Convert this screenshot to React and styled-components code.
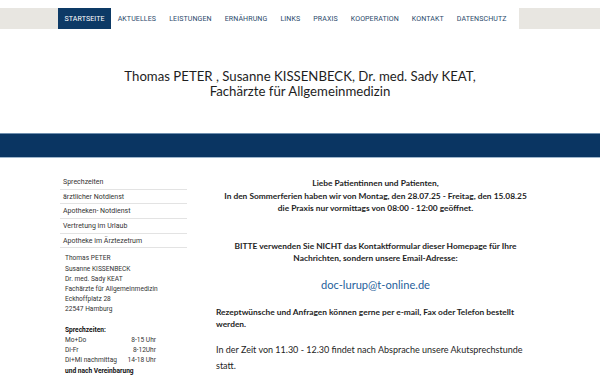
import React from "react"
import styled, { createGlobalStyle } from "styled-components"

const GlobalStyle = createGlobalStyle`
  body {
    margin: 0;
    background: #ffffff;
    font-family: "Lato", "Roboto", sans-serif;
  }
`

const Page = styled.div`
  width: 600px;
  height: 375px;
  overflow: hidden;
  background: #ffffff;
`

const NavBand = styled.div`
  display: grid;
  grid-template-columns: 58px auto 1fr;
  margin-top: 8px;
  height: 21px;
`
const NavFill = styled.div`
  background: #e8e6e1;
`
const Nav = styled.nav`
  display: flex;
  align-items: stretch;
  padding-right: 6px;
  background: #ffffff;
`
const NavItem = styled.a`
  display: flex;
  align-items: center;
  padding: 0 6.5px;
  font-family: "Roboto", sans-serif;
  font-size: 7.05px;
  text-transform: uppercase;
  letter-spacing: 0.1px;
  color: ${p => (p.$active ? "#ffffff" : "#2b4a6b")};
  background: ${p => (p.$active ? "#0d3a66" : "transparent")};
  text-decoration: none;
  white-space: nowrap;
`

const Header = styled.header`
  height: 104px;
  display: flex;
  justify-content: center;
  padding-top: 40px;
  box-sizing: border-box;
`
const Title = styled.h1`
  margin: 0;
  font-family: "Lato", sans-serif;
  font-weight: 400;
  font-size: 13.2px;
  line-height: 15px;
  text-align: center;
  color: #1e1e1e;
`

const Band = styled.div`
  height: 23px;
  background: #0a3562;
  border-top: 1px solid #6f8fae;
  border-bottom: 1px solid #9fb6cc;
`

const Body = styled.div`
  display: grid;
  grid-template-columns: 127px 1fr;
  column-gap: 29px;
  padding: 17px 65px 0 60px;
`

const Side = styled.aside`
  display: flex;
  flex-direction: column;
`
const SideMenu = styled.ul`
  list-style: none;
  margin: 0;
  padding: 0;
`
const SideItem = styled.li`
  height: 13.7px;
  display: flex;
  align-items: center;
  padding-left: 3px;
  font-family: "Roboto", sans-serif;
  font-size: 7px;
  color: #333333;
  border-bottom: 1px solid #e3e3e3;
`
const Address = styled.div`
  padding: 5px 0 0 5px;
  font-family: "Roboto", sans-serif;
  font-size: 6.6px;
  line-height: 10.2px;
  color: #333333;
`
const Line = styled.div`
  white-space: nowrap;
  font-weight: ${p => (p.$bold ? 700 : 400)};
  color: ${p => (p.$bold ? "#111111" : "#333333")};
`
const Spacer = styled.div`
  height: 10.2px;
`
const HoursRow = styled.div`
  display: grid;
  grid-template-columns: 62px 29px;
  white-space: nowrap;
  span:last-child {
    text-align: right;
  }
`

const Main = styled.main`
  font-family: "Lato", sans-serif;
  color: #1e1e1e;
`
const Notice = styled.p`
  margin: ${p => p.$top || 2}px 0 0;
  text-align: center;
  font-weight: 700;
  font-size: 8.4px;
  line-height: 12.5px;
`
const Email = styled.a`
  display: block;
  margin-top: 13px;
  text-align: center;
  font-size: 11.1px;
  line-height: 13px;
  font-weight: 400;
  color: #1f5f9c;
  text-decoration: none;
`
const Para = styled.p`
  margin: ${p => p.$top}px 0 0;
  font-size: ${p => (p.$bold ? 8.4 : 9)}px;
  font-weight: ${p => (p.$bold ? 700 : 400)};
  line-height: ${p => (p.$bold ? 12.5 : 16)}px;
`

const navItems = [
  "Startseite",
  "Aktuelles",
  "Leistungen",
  "Ernährung",
  "Links",
  "Praxis",
  "Kooperation",
  "Kontakt",
  "Datenschutz",
]

const sideItems = [
  "Sprechzeiten",
  "ärztlicher Notdienst",
  "Apotheken- Notdienst",
  "Vertretung im Urlaub",
  "Apotheke im Ärztezetrum",
]

const hours = [
  ["Mo+Do", "8-15 Uhr"],
  ["Di-Fr", "8-12Uhr"],
  ["Di+Mi nachmittag", "14-18 Uhr"],
]

export default function App() {
  return (
    <Page>
      <GlobalStyle />
      <NavBand>
        <NavFill />
        <Nav>
          {navItems.map((item, i) => (
            <NavItem key={item} $active={i === 0}>{item}</NavItem>
          ))}
        </Nav>
        <NavFill />
      </NavBand>

      <Header>
        <Title>
          Thomas PETER , Susanne KISSENBECK, Dr. med. Sady KEAT,
          <br />
          Fachärzte für Allgemeinmedizin
        </Title>
      </Header>

      <Band />

      <Body>
        <Side>
          <SideMenu>
            {sideItems.map(item => (
              <SideItem key={item}>{item}</SideItem>
            ))}
          </SideMenu>
          <Address>
            <Line>Thomas PETER</Line>
            <Line>Susanne KISSENBECK</Line>
            <Line>Dr. med. Sady KEAT</Line>
            <Line>Fachärzte für Allgemeinmedizin</Line>
            <Line>Eckhoffplatz 28</Line>
            <Line>22547 Hamburg</Line>
            <Spacer />
            <Line $bold>Sprechzeiten:</Line>
            {hours.map(([d, t]) => (
              <HoursRow key={d}>
                <span>{d}</span>
                <span>{t}</span>
              </HoursRow>
            ))}
            <Line $bold>und nach Vereinbarung</Line>
          </Address>
        </Side>

        <Main>
          <Notice>
            Liebe Patientinnen und Patienten,
            <br />
            In den Sommerferien haben wir von Montag, den 28.07.25 - Freitag, den 15.08.25
            <br />
            die Praxis nur vormittags von 08:00 - 12:00 geöffnet.
          </Notice>
          <Notice $top={25}>
            BITTE verwenden Sie NICHT das Kontaktformular dieser Homepage für Ihre
            <br />
            Nachrichten, sondern unsere Email-Adresse:
          </Notice>
          <Email href="#">doc-lurup@t-online.de</Email>
          <Para $bold $top={15}>
            Rezeptwünsche und Anfragen können gerne per e-mail, Fax oder Telefon bestellt werden.
          </Para>
          <Para $top={11}>
            In der Zeit von 11.30 - 12.30 findet nach Absprache unsere Akutsprechstunde statt.
          </Para>
        </Main>
      </Body>
    </Page>
  )
}
